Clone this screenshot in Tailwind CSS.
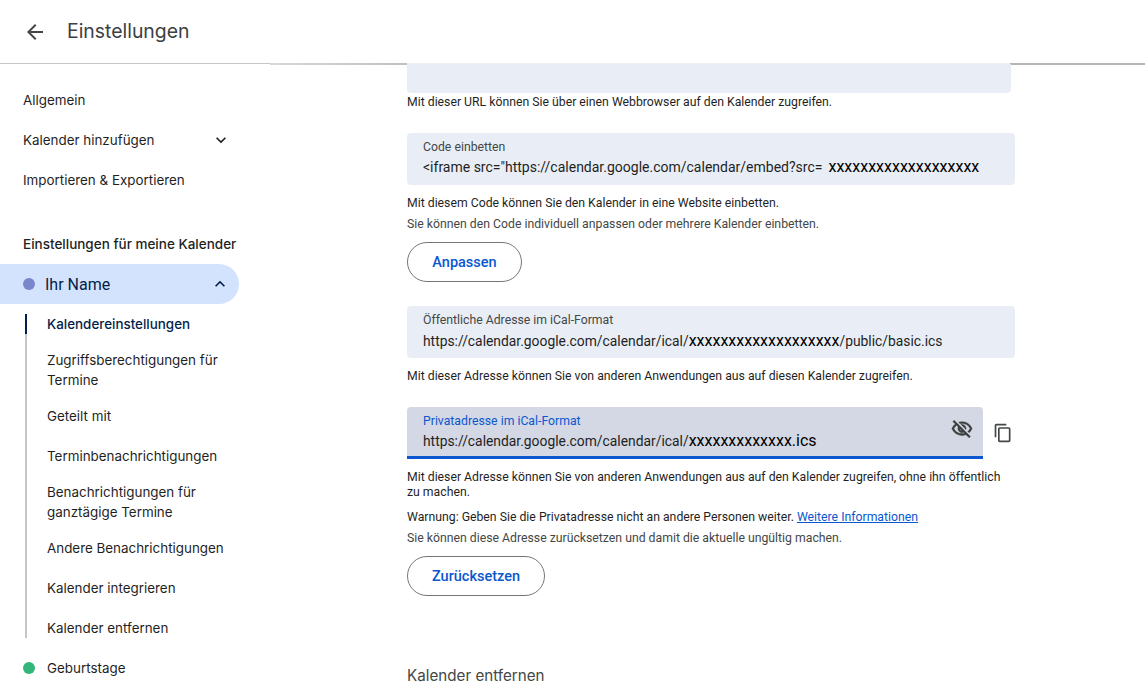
<!DOCTYPE html>
<html>
<head>
<meta charset="UTF-8">
<title>Einstellungen</title>
<script src="https://cdn.jsdelivr.net/npm/@tailwindcss/browser@4"></script>
</head>
<body class="h-[690px] overflow-hidden bg-white font-['Roboto',sans-serif] text-[#1f1f1f]">
  <header class="flex h-[63px] items-center">
    <button class="ml-[23px] flex h-6 w-6 items-center justify-center text-[#444746]">
      <svg class="h-6 w-6" viewBox="0 0 24 24" fill="currentColor"><path d="M20 11H7.83l5.59-5.59L12 4l-8 8 8 8 1.41-1.41L7.83 13H20v-2z"/></svg>
    </button>
    <h1 class="ml-[20px] font-['Inter',sans-serif] text-[19.4px] text-[#3c4043]">Einstellungen</h1>
  </header>
  <div class="flex h-px items-start">
    <i class="h-px w-[270px] bg-[#c4c7c5]"></i>
    <i class="h-[2px] w-[137px] bg-gradient-to-r from-[#d8d8d8] to-[#c0c0c0]"></i>
    <i class="h-px w-[603px] bg-[#f0f0f0]"></i>
    <i class="h-[2px] flex-1 bg-[#b5b5b5]"></i>
  </div>

  <div class="flex">
    <aside class="w-[240px] shrink-0 pt-4 font-['Inter',sans-serif] text-[13.4px] text-[#1f1f1f]">
      <a class="flex h-10 items-center pl-[23px]">Allgemein</a>
      <a class="flex h-10 items-center justify-between pl-[23px] pr-[9px]">Kalender hinzufügen
        <svg class="h-5 w-5" viewBox="0 0 24 24" fill="currentColor"><path d="M7.41 8.59 12 13.17l4.59-4.58L18 10l-6 6-6-6z"/></svg>
      </a>
      <a class="flex h-10 items-center pl-[23px]">Importieren &amp; Exportieren</a>
      <div class="mt-6 flex h-10 items-center pl-[23px] text-[13.5px] font-medium">Einstellungen für meine Kalender</div>

      <div class="flex h-10 w-[239px] items-center justify-between rounded-r-full bg-[#d3e3fd] pl-[23px] pr-[9px] text-[#041e49]">
        <span class="flex items-center gap-[10px] font-['Roboto',sans-serif] text-[16px]"><i class="h-3 w-3 rounded-full bg-[#7986cb]"></i><span class="pt-[1px]">Ihr Name</span></span>
        <svg class="h-5 w-5" viewBox="0 0 24 24" fill="currentColor"><path d="M7.41 15.41 12 10.83l4.59 4.58L18 14l-6-6-6 6z"/></svg>
      </div>

      <nav class="relative ml-[25px] pl-[22px] leading-5">
        <i class="absolute bottom-[10px] left-0 top-[10px] w-[2px] bg-[#c4c7c5]"></i>
        <i class="absolute left-0 top-[10px] h-5 w-[2px] bg-[#041e49]"></i>
        <a class="flex h-10 items-center font-medium text-[#041e49]">Kalendereinstellungen</a>
        <a class="flex h-[52px] items-center">Zugriffsberechtigungen für<br>Termine</a>
        <a class="flex h-10 items-center">Geteilt mit</a>
        <a class="flex h-10 items-center">Terminbenachrichtigungen</a>
        <a class="flex h-[52px] items-center">Benachrichtigungen für<br>ganztägige Termine</a>
        <a class="flex h-10 items-center">Andere Benachrichtigungen</a>
        <a class="flex h-10 items-center">Kalender integrieren</a>
        <a class="flex h-10 items-center">Kalender entfernen</a>
      </nav>

      <a class="flex h-10 items-center gap-3 pl-[23px]"><i class="h-3 w-3 rounded-full bg-[#33b679]"></i>Geburtstage</a>
    </aside>

    <main class="ml-[167px] w-[608px] shrink-0 text-[12.25px] leading-4">
      <div class="h-[29px] w-[604px] rounded-b bg-[#e9eef6]"></div>
      <p class="mt-[1px]">Mit dieser URL können Sie über einen Webbrowser auf den Kalender zugreifen.</p>

      <div class="mt-[23px] h-[52px] overflow-hidden rounded bg-[#e9eef6] px-4 pt-[6px]">
        <div class="text-[#444746]">Code einbetten</div>
        <div class="mt-[2px] whitespace-nowrap text-[14px] leading-5">&lt;iframe src="https://calendar.google.com/calendar/embed?src=<span class="ml-[6px] text-[16px] text-black">xxxxxxxxxxxxxxxxxxx</span></div>
      </div>
      <p class="mt-[10px]">Mit diesem Code können Sie den Kalender in eine Website einbetten.</p>
      <p class="mt-[5px] text-[#444746]">Sie können den Code individuell anpassen oder mehrere Kalender einbetten.</p>
      <button class="mt-[10px] block h-10 w-[115px] rounded-full border border-[#747775] pt-[2px] text-[14.5px] font-medium text-[#0b57d0]">Anpassen</button>

      <div class="mt-6 h-[52px] rounded bg-[#e9eef6] px-4 pt-[6px]">
        <div class="text-[#444746]">Öffentliche Adresse im iCal-Format</div>
        <div class="mt-[3px] whitespace-nowrap text-[13.85px] leading-5">https://calendar.google.com/calendar/ical/<span class="text-[16px] text-black">xxxxxxxxxxxxxxxxxxx</span>/public/basic.ics</div>
      </div>
      <p class="mt-[10px]">Mit dieser Adresse können Sie von anderen Anwendungen aus auf diesen Kalender zugreifen.</p>

      <div class="mt-[23px] flex items-center">
        <div class="flex h-[52px] w-[576px] items-start justify-between rounded-t border-b-[3px] border-[#0b57d0] bg-[#d3d8e4] pl-4 pr-[10px] pt-[6px]">
          <div>
            <div class="text-[#0b57d0]">Privatadresse im iCal-Format</div>
            <div class="mt-[2px] whitespace-nowrap text-[13.85px] leading-5">https://calendar.google.com/calendar/ical/<span class="text-[16px] text-black">xxxxxxxxxxxxx</span><span class="text-[16px] text-black">.ics</span></div>
          </div>
          <svg class="mt-[5px] h-[22px] w-[22px] text-[#3c3f3e]" viewBox="0 0 24 24" fill="currentColor" stroke="currentColor" stroke-width="0.5"><path d="M12 6a9.77 9.77 0 0 1 8.82 5.5 9.7 9.7 0 0 1-2.41 3.12l1.41 1.41A11.8 11.8 0 0 0 23 11.5C21.27 7.11 17 4 12 4c-1.27 0-2.49.2-3.64.57l1.65 1.65C10.66 6.09 11.32 6 12 6zm-1.07 1.14L13 9.21c.57.25 1.03.71 1.28 1.28l2.07 2.07c.08-.34.14-.7.14-1.07C16.5 9.01 14.48 7 12 7c-.37 0-.72.05-1.07.14zM2.01 3.87l2.68 2.68A11.74 11.74 0 0 0 1 11.5C2.73 15.89 7 19 12 19c1.52 0 2.98-.29 4.32-.82l3.42 3.42 1.41-1.41L3.42 2.45 2.01 3.87zm7.5 7.5 2.61 2.61c-.04.01-.08.02-.12.02a2.5 2.5 0 0 1-2.5-2.5c0-.05.01-.08.01-.13zm-3.4-3.4 1.75 1.75a4.6 4.6 0 0 0-.36 1.78 4.5 4.5 0 0 0 6.27 4.14l.98.98c-.88.24-1.8.38-2.75.38a9.77 9.77 0 0 1-8.82-5.5c.7-1.43 1.72-2.61 2.93-3.53z"/></svg>
        </div>
        <svg class="ml-[10px] h-5 w-5 text-[#444746]" viewBox="0 0 24 24" fill="currentColor"><path d="M16 1H4c-1.1 0-2 .9-2 2v14h2V3h12V1zm3 4H8c-1.1 0-2 .9-2 2v14c0 1.1.9 2 2 2h11c1.1 0 2-.9 2-2V7c0-1.1-.9-2-2-2zm0 16H8V7h11v14z"/></svg>
      </div>

      <p class="mt-[11px] leading-[15px]">Mit dieser Adresse können Sie von anderen Anwendungen aus auf den Kalender zugreifen, ohne ihn öffentlich zu machen.</p>
      <p class="mt-[9px]">Warnung: Geben Sie die Privatadresse nicht an andere Personen weiter. <a class="text-[#0b57d0] underline">Weitere Informationen</a></p>
      <p class="mt-[5px] text-[#444746]">Sie können diese Adresse zurücksetzen und damit die aktuelle ungültig machen.</p>
      <button class="mt-[10px] block h-10 w-[138px] rounded-full border border-[#747775] pt-[2px] text-[14.5px] font-medium text-[#0b57d0]">Zurücksetzen</button>

      <h2 class="mt-[70px] font-['Inter',sans-serif] text-[15.2px] leading-5 text-[#444746]">Kalender entfernen</h2>
    </main>
  </div>
</body>
</html>
